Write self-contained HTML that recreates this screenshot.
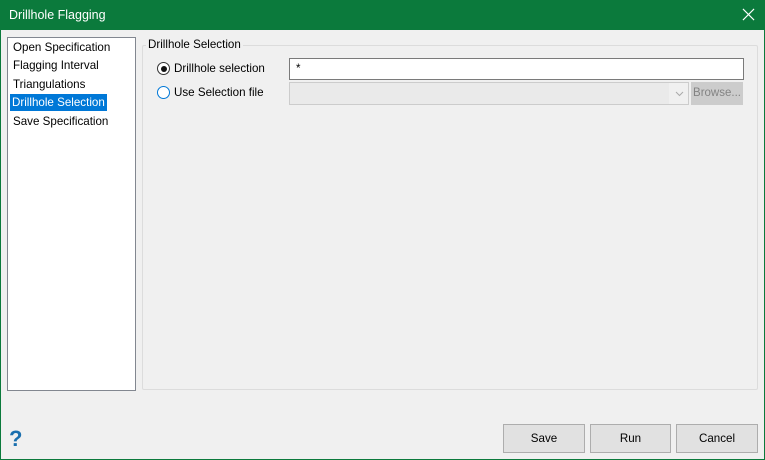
<!DOCTYPE html>
<html><head><style>
*{margin:0;padding:0;box-sizing:border-box}
body{width:765px;height:460px;background:#f0f0f0;font-family:"Liberation Sans",sans-serif;font-size:11.6px;color:#000;position:relative;overflow:hidden}
.frame{position:absolute;left:0;top:0;width:765px;height:460px;border:1px solid #0b7a3c}
.title{position:absolute;left:0;top:0;width:765px;height:30px;background:#0b7a3c;color:#fff;font-size:12.5px;line-height:30px;padding-left:9px}
.x{position:absolute;right:10px;top:8px;width:13px;height:13px}
.side{position:absolute;left:7px;top:37px;width:129px;height:354px;background:#fff;border:1px solid #828790}
.it{position:absolute;left:4px;height:17px;line-height:17px;padding:0 1px}
.sel{background:#0078d7;color:#fff}
.grp{position:absolute;left:142px;top:45px;width:616px;height:345px;border:1px solid #dcdcdc;border-radius:2px}
.gl{position:absolute;left:146px;top:37px;background:#f0f0f0;padding:0 2px;line-height:16px}
.rad{position:absolute;width:13px;height:13px;border-radius:50%;border:1px solid #333;background:#fff}
.rad.off{border-color:#0078d7}
.dot{position:absolute;left:2.5px;top:2.5px;width:6px;height:6px;border-radius:50%;background:#111}
.lbl{position:absolute;left:174px;line-height:16px}
.inp{position:absolute;left:289px;top:58px;width:455px;height:22px;background:#fff;border:1px solid #7a7a7a;padding-left:6px;line-height:20px}
.cmb{position:absolute;left:289px;top:82px;width:400px;height:23px;background:#f0f0f0;border:1px solid #ccc}
.cmb .in{position:absolute;left:0;top:0;width:379px;height:21px;background:#eaeaea}
.br{position:absolute;left:691px;top:82px;width:52px;height:23px;background:#cccccc;color:#838383;text-align:center;line-height:23px;font-size:11.5px}
.btn{position:absolute;top:424px;height:29px;background:#e1e1e1;border:1px solid #adadad;text-align:center;line-height:27px}
.help{position:absolute;left:9px;top:426px;color:#1a6fae;font-weight:bold;font-size:22px}
</style></head><body>
<div class="frame"></div>
<div class="title">Drillhole Flagging
<svg class="x" viewBox="0 0 14 14"><path d="M1 1L13 13M13 1L1 13" stroke="#fff" stroke-width="1.2"/></svg></div>
<div class="side">
<div class="it" style="top:1px">Open Specification</div>
<div class="it" style="top:19px">Flagging Interval</div>
<div class="it" style="top:38px">Triangulations</div>
<div class="it sel" style="top:56px;left:2px;padding:0 2px">Drillhole Selection</div>
<div class="it" style="top:75px">Save Specification</div>
</div>
<div class="grp"></div>
<div class="gl">Drillhole Selection</div>
<div class="rad" style="left:157px;top:62px"><div class="dot"></div></div>
<div class="lbl" style="top:61px">Drillhole selection</div>
<div class="rad off" style="left:157px;top:86px"></div>
<div class="lbl" style="top:85px">Use Selection file</div>
<div class="inp">*</div>
<div class="cmb"><div class="in"></div>
<svg style="position:absolute;left:385px;top:8px" width="9" height="6" viewBox="0 0 9 6"><path d="M1 1L4.5 4.5L8 1" stroke="#aaa" fill="none"/></svg></div>
<div class="br">Browse...</div>
<div class="help">?</div>
<div class="btn" style="left:503px;width:82px">Save</div>
<div class="btn" style="left:590px;width:81px">Run</div>
<div class="btn" style="left:676px;width:82px">Cancel</div>
</body></html>
